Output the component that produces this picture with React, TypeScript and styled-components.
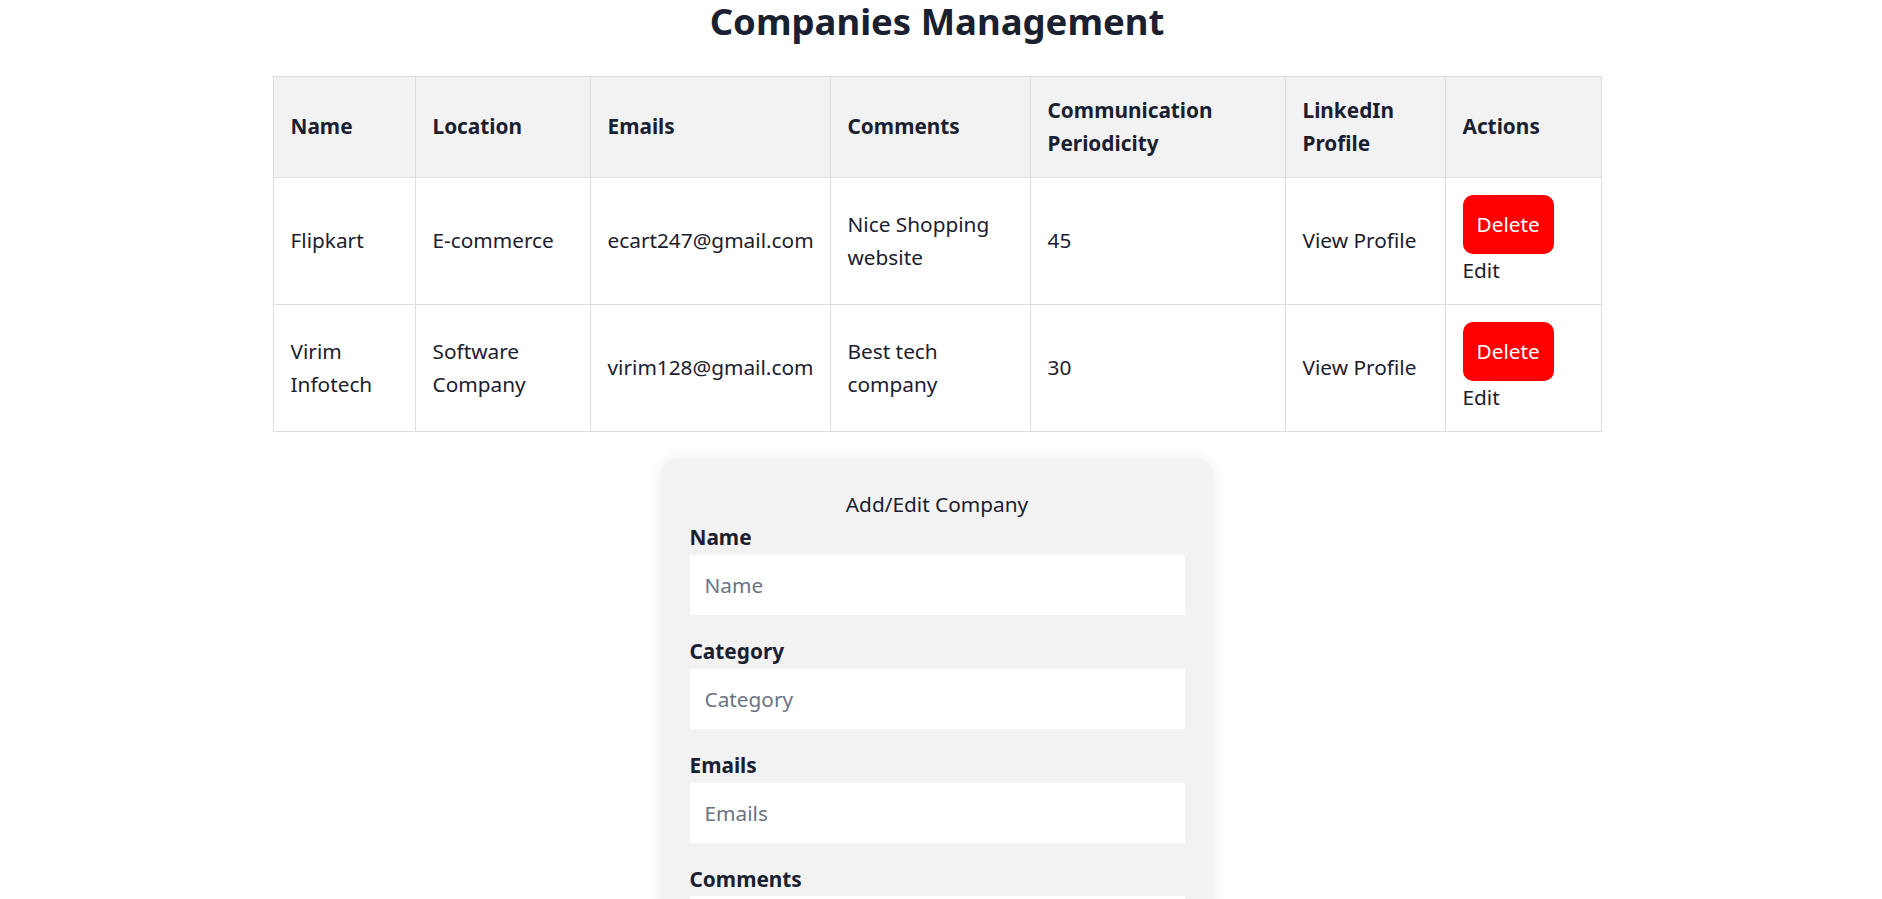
import React from "react";
import styled, { createGlobalStyle } from "styled-components";

const GlobalStyle = createGlobalStyle`
  html, body {
    margin: 0;
    padding: 0;
    background: #ffffff;
  }
  body {
    font-family: "Noto Sans", "Open Sans", Arial, sans-serif;
    font-size: 20.8px;
    line-height: 33.75px;
    color: #1b2030;
  }
  * { box-sizing: border-box; }
`;

const Page = styled.div`
  display: flex;
  flex-direction: column;
  align-items: center;
  padding: 0 8px 40px 0;
`;

const Title = styled.h1`
  margin: 0 0 34px;
  font-size: 36.5px;
  line-height: 42px;
  font-weight: 700;
  color: #1b2030;
`;

const Table = styled.table`
  width: 1328px;
  border-collapse: collapse;
  table-layout: fixed;
`;

const HeadCell = styled.th`
  background: #f2f2f2;
  border: 1px solid #dddddd;
  padding: 16.5px 17px 15.5px;
  text-align: left;
  font-weight: 700;
  vertical-align: middle;
`;

const Cell = styled.td`
  border: 1px solid #dddddd;
  padding: 17.5px 17px 16px;
  text-align: left;
  vertical-align: middle;
  white-space: normal;
`;

const Actions = styled.div`
  display: flex;
  flex-direction: column;
  align-items: flex-start;
`;

const DeleteButton = styled.button`
  background: #ff0000;
  color: #ffffff;
  border: none;
  border-radius: 10px;
  padding: 12.5px 14px;
  font: inherit;
  line-height: 33.75px;
  cursor: pointer;
`;

const EditButton = styled.button`
  background: transparent;
  color: #1b2030;
  border: none;
  padding: 0;
  font: inherit;
  line-height: 33.75px;
  cursor: pointer;
`;

const Card = styled.form`
  width: 552px;
  margin-top: 27px;
  padding: 29px 28.5px 30px;
  background: #f2f2f2;
  border-radius: 16px;
  box-shadow: 0 0 14px rgba(0, 0, 0, 0.09);
  display: flex;
  flex-direction: column;
  gap: 20px;
`;

const CardTitle = styled.h2`
  margin: 0 0 -20px;
  font-size: inherit;
  font-weight: 400;
  line-height: 33.75px;
  text-align: center;
`;

const Field = styled.div`
  display: flex;
  flex-direction: column;
`;

const Label = styled.label`
  font-weight: 700;
  line-height: 33.75px;
`;

const Input = styled.input`
  width: 100%;
  height: 60px;
  border: none;
  background: #ffffff;
  padding: 0 15px;
  font: inherit;
  color: #1b2030;
  outline: none;
  &::placeholder {
    color: #6b7486;
  }
`;

const SubmitButton = styled.button`
  align-self: flex-start;
  background: #1b2030;
  color: #ffffff;
  border: none;
  border-radius: 10px;
  padding: 12.5px 15px;
  font: inherit;
  line-height: 33.75px;
`;

type Company = {
  name: string;
  location: string;
  email: string;
  comments: string;
  periodicity: number;
};

const companies: Company[] = [
  {
    name: "Flipkart",
    location: "E-commerce",
    email: "ecart247@gmail.com",
    comments: "Nice Shopping website",
    periodicity: 45,
  },
  {
    name: "Virim Infotech",
    location: "Software Company",
    email: "virim128@gmail.com",
    comments: "Best tech company",
    periodicity: 30,
  },
];

const columns = [142, 175, 240, 200, 255, 160, 156];

const fields = [
  "Name",
  "Category",
  "Emails",
  "Comments",
  "Communication Periodicity",
  "LinkedIn Profile",
];

export default function App() {
  return (
    <>
      <GlobalStyle />
      <Page>
        <Title>Companies Management</Title>
        <Table>
          <colgroup>
            {columns.map((w, i) => (
              <col key={i} style={{ width: w }} />
            ))}
          </colgroup>
          <thead>
            <tr>
              <HeadCell>Name</HeadCell>
              <HeadCell>Location</HeadCell>
              <HeadCell>Emails</HeadCell>
              <HeadCell>Comments</HeadCell>
              <HeadCell>Communication Periodicity</HeadCell>
              <HeadCell>LinkedIn Profile</HeadCell>
              <HeadCell>Actions</HeadCell>
            </tr>
          </thead>
          <tbody>
            {companies.map((c) => (
              <tr key={c.name}>
                <Cell>{c.name}</Cell>
                <Cell>{c.location}</Cell>
                <Cell>{c.email}</Cell>
                <Cell>{c.comments}</Cell>
                <Cell>{c.periodicity}</Cell>
                <Cell>View Profile</Cell>
                <Cell>
                  <Actions>
                    <DeleteButton type="button">Delete</DeleteButton>
                    <EditButton type="button">Edit</EditButton>
                  </Actions>
                </Cell>
              </tr>
            ))}
          </tbody>
        </Table>
        <Card onSubmit={(e) => e.preventDefault()}>
          <CardTitle>Add/Edit Company</CardTitle>
          {fields.map((f) => (
            <Field key={f}>
              <Label>{f}</Label>
              <Input placeholder={f} />
            </Field>
          ))}
          <SubmitButton type="submit">Save</SubmitButton>
        </Card>
      </Page>
    </>
  );
}
